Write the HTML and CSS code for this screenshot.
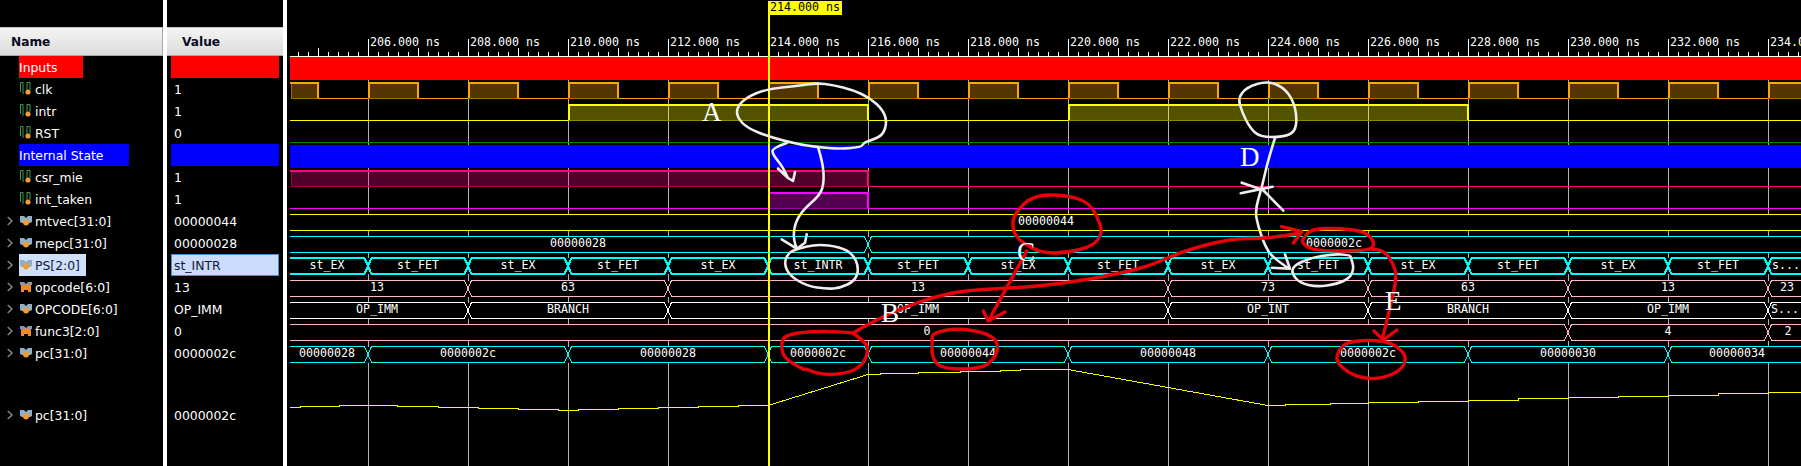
FILE: index.html
```html
<!DOCTYPE html>
<html lang="en">
<head>
<meta charset="utf-8">
<title>Waveform</title>
<link rel="stylesheet" href="styles.css">
</head>
<body>
<svg class="defs" width="0" height="0">
  <defs>
    <symbol id="bit" viewBox="0 0 12 14">
      <path d="M.5 10V.5H3V12M7 12V.5H10V8" fill="none" stroke="#3f9f45" stroke-width="1"/>
      <circle cx="8" cy="10" r="2.6" fill="#f09a35"/>
    </symbol>
    <symbol id="bus" viewBox="0 0 12 12">
      <path d="M0 1H4L6 3 8 1H12V7L10 8H2L0 7Z" fill="#8eb0c6"/>
      <circle cx="6" cy="7.5" r="3" fill="#f29a2e"/>
    </symbol>
    <symbol id="busq" viewBox="0 0 12 12">
      <path d="M0 1H4L6 3 8 1H12V4H0Z" fill="#8a98a0"/>
      <path d="M1 4H11V11H8V9H4V11H1Z" fill="#ee8a25"/>
    </symbol>
    <symbol id="chev" viewBox="0 0 6 10">
      <path d="M.7 1 5 5 .7 9" fill="none" stroke="#8c8c8c" stroke-width="1.4"/>
    </symbol>
    <path id="clkhi" d="M291 0H318M368 0h50m50 0h50m50 0h50m50 0h50m50 0h50m50 0h50m50 0h50m50 0h50m50 0h50m50 0h50m50 0h50m50 0h50m50 0h50m50 0h50M1768 0H1801"/>
    <path id="ps" d="M290 0H364.5l7 16h93l7-16h93l7 16h93l7-16h93l7 16h93l7-16h93l7 16h93l7-16h93l7 16h93l7-16h93l7 16h93l7-16h93l7 16h93l7-16h93l7 16H1801M290 16H364.5l7-16h93l7 16h93l7-16h93l7 16h93l7-16h93l7 16h93l7-16h93l7 16h93l7-16h93l7 16h93l7-16h93l7 16h93l7-16h93l7 16h93l7-16H1801"/>
    <path id="op" d="M290 0H464.5L471.5 16H664.5L671.5 0H1164.5L1171.5 16H1364.5L1371.5 0H1564.5L1571.5 16H1764.5L1771.5 0H1801M290 16H464.5L471.5 0H664.5L671.5 16H1164.5L1171.5 0H1364.5L1371.5 16H1564.5L1571.5 0H1764.5L1771.5 16H1801"/>
  </defs>
</svg>

<main class="viewer">
  <section class="names">
    <header class="head head-name">Name</header>
    <div class="row"><span class="slot"></span><span class="item group red">Inputs</span></div>
    <div class="row"><span class="slot"></span><span class="item"><svg class="ico"><use href="#bit"/></svg>clk</span></div>
    <div class="row"><span class="slot"></span><span class="item"><svg class="ico"><use href="#bit"/></svg>intr</span></div>
    <div class="row"><span class="slot"></span><span class="item"><svg class="ico"><use href="#bit"/></svg>RST</span></div>
    <div class="row"><span class="slot"></span><span class="item group blue">Internal State</span></div>
    <div class="row"><span class="slot"></span><span class="item"><svg class="ico"><use href="#bit"/></svg>csr_mie</span></div>
    <div class="row"><span class="slot"></span><span class="item"><svg class="ico"><use href="#bit"/></svg>int_taken</span></div>
    <div class="row"><span class="slot"><svg class="chev"><use href="#chev"/></svg></span><span class="item"><svg class="ico"><use href="#bus"/></svg>mtvec[31:0]</span></div>
    <div class="row"><span class="slot"><svg class="chev"><use href="#chev"/></svg></span><span class="item"><svg class="ico"><use href="#bus"/></svg>mepc[31:0]</span></div>
    <div class="row"><span class="slot"><svg class="chev"><use href="#chev"/></svg></span><span class="item selected"><svg class="ico"><use href="#bus"/></svg>PS[2:0]</span></div>
    <div class="row"><span class="slot"><svg class="chev"><use href="#chev"/></svg></span><span class="item"><svg class="ico"><use href="#busq"/></svg>opcode[6:0]</span></div>
    <div class="row"><span class="slot"><svg class="chev"><use href="#chev"/></svg></span><span class="item"><svg class="ico"><use href="#bus"/></svg>OPCODE[6:0]</span></div>
    <div class="row"><span class="slot"><svg class="chev"><use href="#chev"/></svg></span><span class="item"><svg class="ico"><use href="#busq"/></svg>func3[2:0]</span></div>
    <div class="row"><span class="slot"><svg class="chev"><use href="#chev"/></svg></span><span class="item"><svg class="ico"><use href="#bus"/></svg>pc[31:0]</span></div>
    <div class="spacer"></div>
    <div class="row"><span class="slot"><svg class="chev"><use href="#chev"/></svg></span><span class="item"><svg class="ico"><use href="#bus"/></svg>pc[31:0]</span></div>
  </section>

  <section class="values">
    <header class="head head-value">Value</header>
    <div class="val red"></div>
    <div class="val">1</div>
    <div class="val">1</div>
    <div class="val">0</div>
    <div class="val blue"></div>
    <div class="val">1</div>
    <div class="val">1</div>
    <div class="val">00000044</div>
    <div class="val">00000028</div>
    <div class="val sel">st_INTR</div>
    <div class="val">13</div>
    <div class="val">OP_IMM</div>
    <div class="val">0</div>
    <div class="val">0000002c</div>
    <div class="spacer"></div>
    <div class="val">0000002c</div>
  </section>

  <section class="wave">
    <svg class="plot" width="1514" height="466" viewBox="287 0 1514 466">
      <!-- time ruler -->
      <g class="crisp">
        <path class="rule" d="M290 56.5H1801"/>
        <line class="tick-s" x1="298" y1="54" x2="1801" y2="54"/>
        <line class="tick-m" x1="318" y1="52" x2="1801" y2="52"/>
        <path class="rule" d="M368.5 39V56M468.5 39V56M568.5 39V56M668.5 39V56M768.5 39V56M868.5 39V56M968.5 39V56M1068.5 39V56M1168.5 39V56M1268.5 39V56M1368.5 39V56M1468.5 39V56M1568.5 39V56M1668.5 39V56M1768.5 39V56"/>
      </g>
      <g class="lbl">
        <text x="370" y="46">206.000 ns</text><text x="470" y="46">208.000 ns</text><text x="570" y="46">210.000 ns</text><text x="670" y="46">212.000 ns</text><text x="770" y="46">214.000 ns</text><text x="870" y="46">216.000 ns</text><text x="970" y="46">218.000 ns</text><text x="1070" y="46">220.000 ns</text><text x="1170" y="46">222.000 ns</text><text x="1270" y="46">224.000 ns</text><text x="1370" y="46">226.000 ns</text><text x="1470" y="46">228.000 ns</text><text x="1570" y="46">230.000 ns</text><text x="1670" y="46">232.000 ns</text><text x="1770" y="46">234.000 ns</text>
      </g>

      <g class="crisp">
        <!-- grid -->
        <path class="grid" d="M368.5 57V466M468.5 57V466M568.5 57V466M668.5 57V466M768.5 57V466M868.5 57V466M968.5 57V466M1068.5 57V466M1168.5 57V466M1268.5 57V466M1368.5 57V466M1468.5 57V466M1568.5 57V466M1668.5 57V466M1768.5 57V466"/>
        <path class="mask" d="M290 222.5H1801M290 244.5H1801M290 266H1801M290 288.5H1801M290 310.5H1801M290 332.5H1801M290 354.5H1801"/>
        <rect class="band-red" x="290" y="57" width="1511" height="23"/>
        <rect class="band-blue" x="290" y="145" width="1511" height="23"/>

        <!-- clk -->
        <use href="#clkhi" y="90.5" class="orange fill15"/>
        <use href="#clkhi" y="98.5" class="orange-dim"/>
        <path class="orange-dim" d="M291.5 84V98"/>
        <path class="orange" d="M318 98.5H368M418 98.5H468M518 98.5H568M618 98.5H668M718 98.5H768M818 98.5H868M918 98.5H968M1018 98.5H1068M1118 98.5H1168M1218 98.5H1268M1318 98.5H1368M1418 98.5H1468M1518 98.5H1568M1618 98.5H1668M1718 98.5H1768"/>
        <path class="orange w2" d="M290 83H318V98M369 98V83H418V98M469 98V83H518V98M569 98V83H618V98M669 98V83H718V98M769 98V83H818V98M869 98V83H918V98M969 98V83H1018V98M1069 98V83H1118V98M1169 98V83H1218V98M1269 98V83H1318V98M1369 98V83H1418V98M1469 98V83H1518V98M1569 98V83H1618V98M1669 98V83H1718V98M1769 98V83H1801"/>

        <!-- intr -->
        <path class="yellow fill15" d="M569 112.5H868M1069 112.5H1468"/>
        <path class="yellow-dim" d="M569 120.5H868M1069 120.5H1468"/>
        <path class="yellow" d="M290 120.5H568M868 120.5H1068M1468 120.5H1801"/>
        <path class="yellow w2" d="M569 120V105H868V120M1069 120V105H1468V120"/>

        <!-- RST -->
        <path class="green" d="M290 142.5H1801"/>

        <!-- csr_mie -->
        <path class="rose fill15" d="M291 178.5H868"/>
        <path class="rose-dim" d="M291 186.5H868M291.5 171V186"/>
        <path class="rose" d="M868 186.5H1801"/>
        <path class="rose w2" d="M290 171H868V186"/>

        <!-- int_taken -->
        <path class="magenta fill15" d="M769 200.5H868"/>
        <path class="magenta-dim" d="M769 208.5H868"/>
        <path class="magenta" d="M290 208.5H768M868 208.5H1801"/>
        <path class="magenta w2" d="M769 208V193H868V208"/>

        <!-- buses -->
        <path class="yellow" d="M290 214.5H1801M290 230.5H1801"/>
        <path class="cyan" d="M290 236.5H864.5L871.5 252.5H1801M290 252.5H864.5L871.5 236.5H1801"/>
        <use href="#ps" y="258" class="cyan w2"/>
        <use href="#op" y="280.5" class="pink"/>
        <use href="#op" y="302.5" class="white"/>
        <path class="pink" d="M290 324.5H1564.5L1571.5 340.5H1764.5L1771.5 324.5H1801M290 340.5H1564.5L1571.5 324.5H1764.5L1771.5 340.5H1801"/>
        <path class="cyan" d="M290 346.5H364.5L371.5 362.5H564.5L571.5 346.5H764.5L771.5 362.5H864.5L871.5 346.5H1064.5L1071.5 362.5H1264.5L1271.5 346.5H1464.5L1471.5 362.5H1664.5L1671.5 346.5H1801M290 362.5H364.5L371.5 346.5H564.5L571.5 362.5H764.5L771.5 346.5H864.5L871.5 362.5H1064.5L1071.5 346.5H1264.5L1271.5 362.5H1464.5L1471.5 346.5H1664.5L1671.5 362.5H1801"/>

        <!-- analog -->
        <path class="yellow" d="M290 407.5H300V406.5H339V405.5H397V406.5H438V407.5H478V408.5H518V409.5H558V410.5H578V409.5H618V408.5H658V407.5H698V406.5H738V405.5H768L868 374.5H880V373.5H918V372.5H960V371.5H1000V370.5H1020V369.5H1068L1268 405.5H1285V404.5H1330V403.5H1368V402.5H1418V401.5H1468V400.5H1518V398.5H1568V397.5H1618V396.5H1668V395.5H1718V393.5H1768V392.5H1801"/>
      </g>

      <!-- bus values -->
      <g class="bv">
        <text x="1046" y="224.5">00000044</text>
        <text x="578" y="246.5">00000028</text><text x="1334" y="246.5">0000002c</text>
        <text x="327" y="268.5">st_EX</text><text x="418" y="268.5">st_FET</text><text x="518" y="268.5">st_EX</text><text x="618" y="268.5">st_FET</text><text x="718" y="268.5">st_EX</text><text x="818" y="268.5">st_INTR</text><text x="918" y="268.5">st_FET</text><text x="1018" y="268.5">st_EX</text><text x="1118" y="268.5">st_FET</text><text x="1218" y="268.5">st_EX</text><text x="1318" y="268.5">st_FET</text><text x="1418" y="268.5">st_EX</text><text x="1518" y="268.5">st_FET</text><text x="1618" y="268.5">st_EX</text><text x="1718" y="268.5">st_FET</text><text x="1786" y="268.5">s...</text>
        <text x="377" y="290.5">13</text><text x="568" y="290.5">63</text><text x="918" y="290.5">13</text><text x="1268" y="290.5">73</text><text x="1468" y="290.5">63</text><text x="1668" y="290.5">13</text><text x="1787" y="290.5">23</text>
        <text x="377" y="312.5">OP_IMM</text><text x="568" y="312.5">BRANCH</text><text x="918" y="312.5">OP_IMM</text><text x="1268" y="312.5">OP_INT</text><text x="1468" y="312.5">BRANCH</text><text x="1668" y="312.5">OP_IMM</text><text x="1785" y="312.5">S...</text>
        <text x="927" y="334.5">0</text><text x="1668" y="334.5">4</text><text x="1788" y="334.5">2</text>
        <text x="327" y="356.5">00000028</text><text x="468" y="356.5">0000002c</text><text x="668" y="356.5">00000028</text><text x="818" y="356.5">0000002c</text><text x="968" y="356.5">00000044</text><text x="1168" y="356.5">00000048</text><text x="1368" y="356.5">0000002c</text><text x="1568" y="356.5">00000030</text><text x="1737" y="356.5">00000034</text>
      </g>

      <!-- cursor -->
      <rect class="cursor" x="768" y="15" width="2" height="451"/>
      <rect class="cursor" x="768" y="1" width="74" height="14"/>
      <text class="cursor-text" x="770" y="11">214.000 ns</text>

      <!-- white annotations -->
      <g class="pen-white">
        <path d="M807 84.5Q817 83 825 84Q833 85 843 87.5Q853 90 861.5 94Q870 98 876.5 104Q883 110 885 116Q887 122 885 128.5Q883 135 877.5 137.5Q872 140 867.5 141.5Q863 143 862.5 145Q862 147 851 148Q840 149 828.5 148Q817 147 807 145.5Q797 144 783.5 140.5Q770 137 758.5 132.5Q747 128 742 122.5Q737 117 737 112Q737 107 742 102Q747 97 757 93Q767 89 782 87.5Q797 86 807 84.5Z"/>
        <path d="M787 143Q772 148 772.5 151.5Q773 155 778 161Q783 167 788 178M778 168.5 788 178 793 181 795 172"/>
        <path d="M818 147Q823 163 823.5 173Q824 183 822 189Q820 195 811.5 202.5Q803 210 799 216.5Q795 223 794 231.5Q793 240 797 249M781.7 239.3 796.7 248.7 805 242.7 806.7 234.3"/>
        <path d="M807 246.5Q817 244 828.5 245.5Q840 247 846.5 250.5Q853 254 856 261Q859 268 857 274.5Q855 281 847.5 284.5Q840 288 833.5 288.5Q827 289 817 287.5Q807 286 798.5 281Q790 276 787 270Q784 264 786 258.5Q788 253 792.5 251Q797 249 807 246.5Z"/>
        <path d="M1275 84Q1283 87 1288 93.5Q1293 100 1295 108.5Q1297 117 1296 124.5Q1295 132 1289 134.5Q1283 137 1271.5 137Q1260 137 1255 132.5Q1250 128 1246 120Q1242 112 1240 105Q1238 98 1242.5 92.5Q1247 87 1257 84Q1267 81 1275 84Z"/>
        <path d="M1275 138Q1268 160 1265 173.5Q1262 187 1258.5 198.5Q1255 210 1256.5 218Q1258 226 1261.5 236Q1265 246 1269 252Q1273 258 1288 268M1271.7 267.7 1290 268.7 1285 254.3"/>
        <path d="M1241.7 182.7 1263 190 1283.3 210.7M1240.7 193.3 1272.7 186.7"/>
        <path d="M1341.5 254.5Q1333 254 1321.5 256Q1310 258 1301.5 262Q1293 266 1292.5 270Q1292 274 1296 278.5Q1300 283 1308.5 285Q1317 287 1327 285.5Q1337 284 1343.5 281Q1350 278 1352 273Q1354 268 1352.5 263Q1351 258 1350.5 256.5Q1350 255 1341.5 254.5Z"/>
      </g>

      <!-- red annotations -->
      <g class="pen-red">
        <path d="M853 333Q833 331 818 331.5Q803 332 793 334Q783 336 782 342Q781 348 783 353.5Q785 359 794 364Q803 369 804 369.5M806 369Q817 374 828.5 374.5Q840 375 850 371.5Q860 368 864 361Q868 354 867.5 348.5Q867 343 853 333"/>
        <path d="M853 333Q870 323 885 316Q900 309 916.5 303Q933 297 950 293.5Q967 290 992 289Q1017 288 1042 285.5Q1067 283 1092 278.5Q1117 274 1133.5 270Q1150 266 1166.5 258.5Q1183 251 1208 244.5Q1233 238 1250 238.5Q1267 239 1300 233M1281.7 226.7 1301.7 231.7 1293.3 243"/>
        <path d="M1308 233Q1313 228 1331.5 228.5Q1350 229 1358.5 231Q1367 233 1371 238Q1375 243 1372.5 247Q1370 251 1341.5 251Q1313 251 1307.5 247Q1302 243 1302.5 240.5Q1303 238 1308 233Z"/>
        <path d="M1370 249Q1383 249 1388 256Q1393 263 1395 269.5Q1397 276 1393.5 292.5Q1390 309 1383 336M1374 331 1383.3 340 1396.7 330"/>
        <path d="M1391.5 344Q1400 348 1403.5 353.5Q1407 359 1403.5 365Q1400 371 1391.5 374.5Q1383 378 1375 378.5Q1367 379 1358.5 376.5Q1350 374 1342.5 367.5Q1335 361 1337.5 354.5Q1340 348 1345 344.5Q1350 341 1366.5 340.5Q1383 340 1391.5 344Z"/>
        <path d="M1050 195Q1067 195 1078.5 199Q1090 203 1095 213Q1100 223 1101 228.5Q1102 234 1097.5 240Q1093 246 1080 249.5Q1067 253 1053.5 253Q1040 253 1028.5 246Q1017 239 1014.5 232.5Q1012 226 1013.5 219.5Q1015 213 1024 204Q1033 195 1050 195Z"/>
        <path d="M1026.7 251 988.3 321M983.3 311 988.3 321 1005 312"/>
        <path d="M945 330.5Q957 328 972 330.5Q987 333 993 338Q999 343 997 351Q995 359 987.5 364Q980 369 961.5 369Q943 369 937.5 364Q932 359 932 349Q932 339 932.5 336Q933 333 945 330.5Z"/>
      </g>

      <g class="letters">
        <text x="702" y="120.5">A</text>
        <text x="881" y="322">B</text>
        <text x="1017" y="261">C</text>
        <text x="1240" y="166">D</text>
        <text x="1385" y="310">E</text>
      </g>
    </svg>
  </section>
</main>
</body>
</html>
```
FILE: styles.css
```css
html, body {
  margin: 0;
  height: 466px;
  overflow: hidden;
  background: #000;
}
.defs { position: absolute; }

.viewer {
  display: flex;
  width: 1801px;
  height: 466px;
  font-family: "DejaVu Sans", sans-serif;
  font-size: 12.4px;
  color: #fff;
}

.names, .values {
  box-sizing: border-box;
  padding-top: 27px;
  border-right: 4px solid #fff;
  background: #000;
}
.names { width: 167px; }
.values { width: 120px; }
.wave { flex: 1; overflow: hidden; }
.plot { display: block; }

.head {
  box-sizing: border-box;
  height: 29px;
  line-height: 28px;
  font-size: 12.2px;
  font-weight: bold;
  color: #0b0b22;
  background: linear-gradient(#f4f4f4, #dcdcdc);
  border-top: 1px solid #c4c4c4;
  border-bottom: 1px solid #a8a8a8;
}
.head-name { padding-left: 11px; border-right: 1px solid #a8a8a8; }
.head-value { padding-left: 15px; }

.row {
  display: flex;
  height: 22px;
  line-height: 20px;
  padding-left: 7px;
}
.slot {
  display: flex;
  align-items: center;
  width: 12px;
}
.chev { width: 6px; height: 10px; }
.item {
  box-sizing: border-box;
  display: flex;
  align-items: center;
  gap: 3px;
  padding: 2px 0 0 1px;
  white-space: nowrap;
}
.ico { width: 12px; height: 14px; margin-bottom: 2px; }
.group { padding-left: 0; padding-right: 25px; }
.selected {
  padding-right: 6px;
  background: #cfe0fb;
  color: #14143c;
}
.spacer { height: 40px; }

.val {
  box-sizing: border-box;
  height: 22px;
  line-height: 24px;
  margin: 0 4px;
  padding-left: 3px;
}
.red { background: #f00; }
.blue { background: #00f; }
.sel {
  line-height: 22px;
  background: #c9dcfb;
  border: 1px solid #4a8fcf;
  padding-left: 2px;
  color: #14143c;
}

/* wave drawing */
.crisp { shape-rendering: crispEdges; }
.crisp path, .crisp use, .crisp line { fill: none; stroke-width: 1; }
.rule { stroke: #fff; }
.tick-s { stroke: #fff; stroke-width: 4 !important; stroke-dasharray: 1 9; }
.tick-m { stroke: #fff; stroke-width: 8 !important; stroke-dasharray: 1 49; }
.grid { stroke: #b4b4b4; }
.crisp .mask { stroke: #000; stroke-width: 16; }
.band-red { fill: #f00; }
.band-blue { fill: #00f; }

.crisp .orange { stroke: #ffa500; }
.crisp .orange-dim { stroke: #a06a00; }
.crisp .yellow { stroke: #ff0; }
.crisp .yellow-dim { stroke: #8c8c00; }
.crisp .green { stroke: #008000; }
.crisp .rose { stroke: #ff0080; }
.crisp .rose-dim { stroke: #a00050; }
.crisp .magenta { stroke: #f0f; }
.crisp .magenta-dim { stroke: #a000a0; }
.crisp .cyan { stroke: #0ff; }
.crisp .pink { stroke: #ffb6c1; }
.crisp .white { stroke: #fff; }
.crisp .w2 { stroke-width: 2; }
.crisp .fill15 { stroke-width: 15; stroke-opacity: .32; }

.lbl text, .bv text, .cursor-text {
  font-family: "DejaVu Sans Mono", monospace;
  font-size: 11.65px;
}
.lbl text, .bv text { fill: #fff; }
.bv text { text-anchor: middle; }
.cursor { fill: #ff0; }
.cursor-text { fill: #000; }

.pen-white path, .pen-red path {
  fill: none;
  stroke-linecap: round;
  stroke-linejoin: round;
}
.pen-white path { stroke: #eee; stroke-width: 2.6; }
.pen-red path { stroke: #e8000a; stroke-width: 3.4; }
.letters text {
  font-family: "Liberation Serif", serif;
  font-size: 27px;
  fill: #fff;
}
```
